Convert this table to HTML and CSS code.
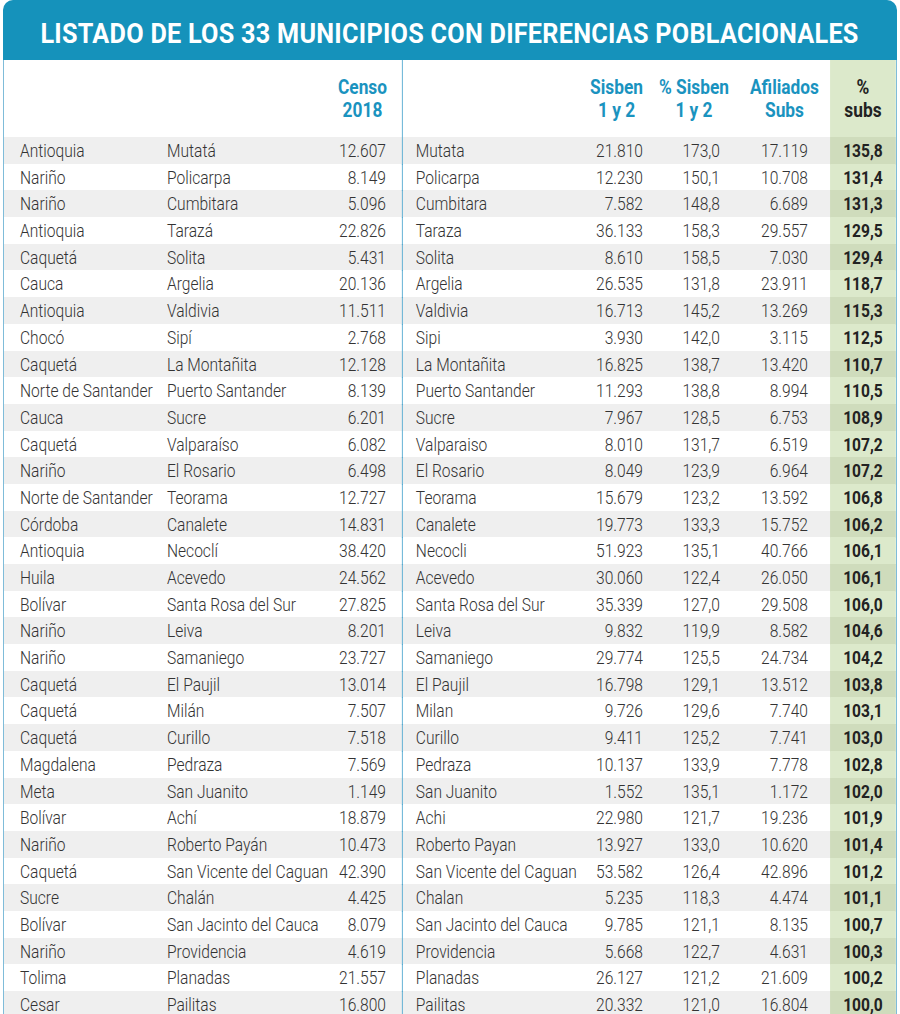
FILE: index.html
```html
<!DOCTYPE html>
<html lang="es">
<head>
<meta charset="utf-8">
<title>Listado de los 33 municipios</title>
<link rel="stylesheet" href="styles.css">
</head>
<body>
<div class="card">
  <div class="title"><span>LISTADO DE LOS 33 MUNICIPIOS CON DIFERENCIAS POBLACIONALES</span></div>
  <div class="body">
    <div class="tbl">
      <div class="head">
        <div class="h"></div>
        <div class="h"></div>
        <div class="h hr"><span>Censo<br>2018</span></div>
        <div class="h div"></div>
        <div class="h hr"><span>Sisben<br>1 y 2</span></div>
        <div class="h hc"><span>% Sisben<br>1 y 2</span></div>
        <div class="h hc ha"><span>Afiliados<br>Subs</span></div>
        <div class="h hc hg"><span>%<br>subs</span></div>
      </div>
      <div class="r"><div>Antioquia</div><div>Mutatá</div><div class="n">12.607</div><div class="m">Mutata</div><div class="n">21.810</div><div class="n">173,0</div><div class="n a">17.119</div><div class="g">135,8</div></div>
      <div class="r"><div>Nariño</div><div>Policarpa</div><div class="n">8.149</div><div class="m">Policarpa</div><div class="n">12.230</div><div class="n">150,1</div><div class="n a">10.708</div><div class="g">131,4</div></div>
      <div class="r"><div>Nariño</div><div>Cumbitara</div><div class="n">5.096</div><div class="m">Cumbitara</div><div class="n">7.582</div><div class="n">148,8</div><div class="n a">6.689</div><div class="g">131,3</div></div>
      <div class="r"><div>Antioquia</div><div>Tarazá</div><div class="n">22.826</div><div class="m">Taraza</div><div class="n">36.133</div><div class="n">158,3</div><div class="n a">29.557</div><div class="g">129,5</div></div>
      <div class="r"><div>Caquetá</div><div>Solita</div><div class="n">5.431</div><div class="m">Solita</div><div class="n">8.610</div><div class="n">158,5</div><div class="n a">7.030</div><div class="g">129,4</div></div>
      <div class="r"><div>Cauca</div><div>Argelia</div><div class="n">20.136</div><div class="m">Argelia</div><div class="n">26.535</div><div class="n">131,8</div><div class="n a">23.911</div><div class="g">118,7</div></div>
      <div class="r"><div>Antioquia</div><div>Valdivia</div><div class="n">11.511</div><div class="m">Valdivia</div><div class="n">16.713</div><div class="n">145,2</div><div class="n a">13.269</div><div class="g">115,3</div></div>
      <div class="r"><div>Chocó</div><div>Sipí</div><div class="n">2.768</div><div class="m">Sipi</div><div class="n">3.930</div><div class="n">142,0</div><div class="n a">3.115</div><div class="g">112,5</div></div>
      <div class="r"><div>Caquetá</div><div>La Montañita</div><div class="n">12.128</div><div class="m">La Montañita</div><div class="n">16.825</div><div class="n">138,7</div><div class="n a">13.420</div><div class="g">110,7</div></div>
      <div class="r"><div>Norte de Santander</div><div>Puerto Santander</div><div class="n">8.139</div><div class="m">Puerto Santander</div><div class="n">11.293</div><div class="n">138,8</div><div class="n a">8.994</div><div class="g">110,5</div></div>
      <div class="r"><div>Cauca</div><div>Sucre</div><div class="n">6.201</div><div class="m">Sucre</div><div class="n">7.967</div><div class="n">128,5</div><div class="n a">6.753</div><div class="g">108,9</div></div>
      <div class="r"><div>Caquetá</div><div>Valparaíso</div><div class="n">6.082</div><div class="m">Valparaiso</div><div class="n">8.010</div><div class="n">131,7</div><div class="n a">6.519</div><div class="g">107,2</div></div>
      <div class="r"><div>Nariño</div><div>El Rosario</div><div class="n">6.498</div><div class="m">El Rosario</div><div class="n">8.049</div><div class="n">123,9</div><div class="n a">6.964</div><div class="g">107,2</div></div>
      <div class="r"><div>Norte de Santander</div><div>Teorama</div><div class="n">12.727</div><div class="m">Teorama</div><div class="n">15.679</div><div class="n">123,2</div><div class="n a">13.592</div><div class="g">106,8</div></div>
      <div class="r"><div>Córdoba</div><div>Canalete</div><div class="n">14.831</div><div class="m">Canalete</div><div class="n">19.773</div><div class="n">133,3</div><div class="n a">15.752</div><div class="g">106,2</div></div>
      <div class="r"><div>Antioquia</div><div>Necoclí</div><div class="n">38.420</div><div class="m">Necocli</div><div class="n">51.923</div><div class="n">135,1</div><div class="n a">40.766</div><div class="g">106,1</div></div>
      <div class="r"><div>Huila</div><div>Acevedo</div><div class="n">24.562</div><div class="m">Acevedo</div><div class="n">30.060</div><div class="n">122,4</div><div class="n a">26.050</div><div class="g">106,1</div></div>
      <div class="r"><div>Bolívar</div><div>Santa Rosa del Sur</div><div class="n">27.825</div><div class="m">Santa Rosa del Sur</div><div class="n">35.339</div><div class="n">127,0</div><div class="n a">29.508</div><div class="g">106,0</div></div>
      <div class="r"><div>Nariño</div><div>Leiva</div><div class="n">8.201</div><div class="m">Leiva</div><div class="n">9.832</div><div class="n">119,9</div><div class="n a">8.582</div><div class="g">104,6</div></div>
      <div class="r"><div>Nariño</div><div>Samaniego</div><div class="n">23.727</div><div class="m">Samaniego</div><div class="n">29.774</div><div class="n">125,5</div><div class="n a">24.734</div><div class="g">104,2</div></div>
      <div class="r"><div>Caquetá</div><div>El Paujil</div><div class="n">13.014</div><div class="m">El Paujil</div><div class="n">16.798</div><div class="n">129,1</div><div class="n a">13.512</div><div class="g">103,8</div></div>
      <div class="r"><div>Caquetá</div><div>Milán</div><div class="n">7.507</div><div class="m">Milan</div><div class="n">9.726</div><div class="n">129,6</div><div class="n a">7.740</div><div class="g">103,1</div></div>
      <div class="r"><div>Caquetá</div><div>Curillo</div><div class="n">7.518</div><div class="m">Curillo</div><div class="n">9.411</div><div class="n">125,2</div><div class="n a">7.741</div><div class="g">103,0</div></div>
      <div class="r"><div>Magdalena</div><div>Pedraza</div><div class="n">7.569</div><div class="m">Pedraza</div><div class="n">10.137</div><div class="n">133,9</div><div class="n a">7.778</div><div class="g">102,8</div></div>
      <div class="r"><div>Meta</div><div>San Juanito</div><div class="n">1.149</div><div class="m">San Juanito</div><div class="n">1.552</div><div class="n">135,1</div><div class="n a">1.172</div><div class="g">102,0</div></div>
      <div class="r"><div>Bolívar</div><div>Achí</div><div class="n">18.879</div><div class="m">Achi</div><div class="n">22.980</div><div class="n">121,7</div><div class="n a">19.236</div><div class="g">101,9</div></div>
      <div class="r"><div>Nariño</div><div>Roberto Payán</div><div class="n">10.473</div><div class="m">Roberto Payan</div><div class="n">13.927</div><div class="n">133,0</div><div class="n a">10.620</div><div class="g">101,4</div></div>
      <div class="r"><div>Caquetá</div><div>San Vicente del Caguan</div><div class="n">42.390</div><div class="m">San Vicente del Caguan</div><div class="n">53.582</div><div class="n">126,4</div><div class="n a">42.896</div><div class="g">101,2</div></div>
      <div class="r"><div>Sucre</div><div>Chalán</div><div class="n">4.425</div><div class="m">Chalan</div><div class="n">5.235</div><div class="n">118,3</div><div class="n a">4.474</div><div class="g">101,1</div></div>
      <div class="r"><div>Bolívar</div><div>San Jacinto del Cauca</div><div class="n">8.079</div><div class="m">San Jacinto del Cauca</div><div class="n">9.785</div><div class="n">121,1</div><div class="n a">8.135</div><div class="g">100,7</div></div>
      <div class="r"><div>Nariño</div><div>Providencia</div><div class="n">4.619</div><div class="m">Providencia</div><div class="n">5.668</div><div class="n">122,7</div><div class="n a">4.631</div><div class="g">100,3</div></div>
      <div class="r"><div>Tolima</div><div>Planadas</div><div class="n">21.557</div><div class="m">Planadas</div><div class="n">26.127</div><div class="n">121,2</div><div class="n a">21.609</div><div class="g">100,2</div></div>
      <div class="r"><div>Cesar</div><div>Pailitas</div><div class="n">16.800</div><div class="m">Pailitas</div><div class="n">20.332</div><div class="n">121,0</div><div class="n a">16.804</div><div class="g">100,0</div></div>
    </div>
  </div>
</div>
</body>
</html>
```
FILE: styles.css
```css
* { box-sizing: border-box; }
html, body { margin: 0; padding: 0; background: #ffffff; }
body {
  font-family: Roboto, "Liberation Sans", sans-serif;
  color: #333333;
  overflow: hidden;
}
.card {
  --s: 0.865;
  margin-left: 3px;
  width: 894px;
}
.title {
  height: 60px;
  background: #1592bb;
  border-radius: 10px 10px 0 0;
  color: #ffffff;
  display: flex;
  justify-content: center;
  align-items: flex-start;
  font-weight: 700;
  font-size: 28px;
  line-height: 67px;
  white-space: nowrap;
  overflow: hidden;
}
.title span {
  flex: none;
  display: block;
  transform: scaleX(0.9);
  transform-origin: 50% 50%;
  letter-spacing: 0.3px;
}
.body {
  border-left: 1px solid #7fbcd9;
  border-right: 1px solid #7fbcd9;
  overflow: hidden;
}
.tbl {
  width: calc(892px / var(--s));
  transform: scaleX(var(--s));
  transform-origin: 0 0;
}
.head, .r {
  display: grid;
}
.head {
  grid-template-columns:
    calc(163px / var(--s)) calc(133px / var(--s)) calc(102px / var(--s))
    calc(158px / var(--s)) calc(83px / var(--s)) calc(102px / var(--s))
    calc(85px / var(--s)) 1fr;
  height: 77px;
  font-weight: 700;
  font-size: 20px;
  line-height: 23px;
  color: #1a93bf;
}
.h {
  display: flex;
  align-items: center;
}
.h span { display: inline-block; text-align: center; }
.hr { justify-content: flex-end; }
.hr:nth-child(3) { padding-right: calc(15px / var(--s)); }
.hc { justify-content: center; }
.ha { padding-right: calc(6px / var(--s)); }
.hg { background: #dce9cb; color: #222222; }
.div { border-left: calc(1.2px / var(--s)) solid #4fa7cf; }
.r {
  grid-template-columns:
    calc(163px / var(--s)) calc(133px / var(--s)) calc(102px / var(--s))
    calc(158px / var(--s)) calc(83px / var(--s)) calc(77px / var(--s))
    calc(110px / var(--s)) 1fr;
  height: 26.7px;
  font-weight: 300;
  font-size: 18px;
  line-height: 27.5px;
  white-space: nowrap;
}
.r:nth-child(even) { background: #efefef; }
.r > div:first-child { padding-left: calc(16px / var(--s)); }
.r > div:nth-child(3) { padding-right: calc(16px / var(--s)); }
.n { text-align: right; }
.m {
  border-left: calc(1.2px / var(--s)) solid #4fa7cf;
  padding-left: calc(13px / var(--s));
}
.a { padding-right: calc(22px / var(--s)); }
.g {
  background: #dce9cb;
  text-align: center;
  font-weight: 700;
  color: #222222;
}
.r:nth-child(even) .g { background: #cfdcbc; }
```
